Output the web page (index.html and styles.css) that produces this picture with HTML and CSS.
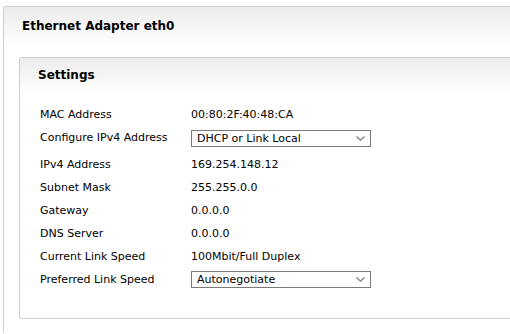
FILE: index.html
```html
<!DOCTYPE html>
<html>
<head>
<meta charset="utf-8">
<link rel="stylesheet" href="styles.css">
</head>
<body>
<div class="panel">
  <div class="panel-head"><h1 class="title">Ethernet Adapter eth0</h1></div>
  <div class="panel-body">
    <div class="card">
      <div class="card-head"><h2 class="subtitle">Settings</h2></div>
      <div class="grid">
        <div class="label">MAC Address</div>
        <div class="value">00:80:2F:40:48:CA</div>
        <div class="label">Configure IPv4 Address</div>
        <div class="value"><div class="select"><span>DHCP or Link Local</span><svg class="chev" width="9" height="5" viewBox="0 0 9 5"><path d="M0.5 0.5 L4.5 4.2 L8.5 0.5" fill="none" stroke="#777" stroke-width="1.1"/></svg></div></div>
        <div class="label">IPv4 Address</div>
        <div class="value">169.254.148.12</div>
        <div class="label">Subnet Mask</div>
        <div class="value">255.255.0.0</div>
        <div class="label">Gateway</div>
        <div class="value">0.0.0.0</div>
        <div class="label">DNS Server</div>
        <div class="value">0.0.0.0</div>
        <div class="label">Current Link Speed</div>
        <div class="value">100Mbit/Full Duplex</div>
        <div class="label">Preferred Link Speed</div>
        <div class="value"><div class="select sel2"><span>Autonegotiate</span><svg class="chev" width="9" height="5" viewBox="0 0 9 5"><path d="M0.5 0.5 L4.5 4.2 L8.5 0.5" fill="none" stroke="#777" stroke-width="1.1"/></svg></div></div>
      </div>
    </div>
  </div>
</div>
</body>
</html>
```
FILE: styles.css
```css
html, body {
  margin: 0;
  padding: 0;
  background: #fff;
  overflow: hidden;
  width: 510px;
  height: 334px;
}
body {
  font-family: "DejaVu Sans", Verdana, sans-serif;
  font-size: 11px;
  color: #000;
  padding: 6px 0 0 3px;
  box-sizing: border-box;
}
.panel {
  height: 327px;
  border: 1px solid #cfcfcf;
  border-right: none;
  border-bottom: none;
  border-radius: 3px 0 0 0;
  box-sizing: border-box;
  background: #fff;
}
.panel-head {
  height: 38px;
  background: linear-gradient(#ececec, #fbfbfb 80%, #fff);
  border-radius: 3px 0 0 0;
  padding: 0 0 0 18px;
  box-sizing: border-box;
}
.title {
  margin: 0;
  font-size: 12px;
  font-weight: bold;
  line-height: 14px;
  padding-top: 12px;
  color: #000;
}
.panel-body {
  padding: 12px 0 0 15px;
}
.card {
  height: 262px;
  border: 1px solid #cfcfcf;
  border-right: none;
  border-radius: 3px 0 0 3px;
  box-sizing: border-box;
}
.card-head {
  height: 36px;
  background: linear-gradient(#ececec, #fbfbfb 80%, #fff);
  border-radius: 3px 0 0 0;
  padding-left: 18px;
}
.subtitle {
  margin: 0;
  font-size: 12px;
  font-weight: bold;
  line-height: 14px;
  padding-top: 10px;
  color: #000;
}
.grid {
  display: grid;
  grid-template-columns: 151px 200px;
  padding: 9px 0 0 20px;
}
.label, .value {
  line-height: 23px;
  white-space: nowrap;
}
.select {
  width: 180px;
  height: 17px;
  margin: 4px 0 6px;
  border: 1px solid #7a7a7a;
  box-sizing: border-box;
  display: flex;
  align-items: center;
  justify-content: space-between;
  padding: 0 5px 0 5px;
  line-height: 15px;
  background: #fff;
}
.sel2 {
  margin: 3px 0 0;
}
.chev {
  display: block;
}
```
